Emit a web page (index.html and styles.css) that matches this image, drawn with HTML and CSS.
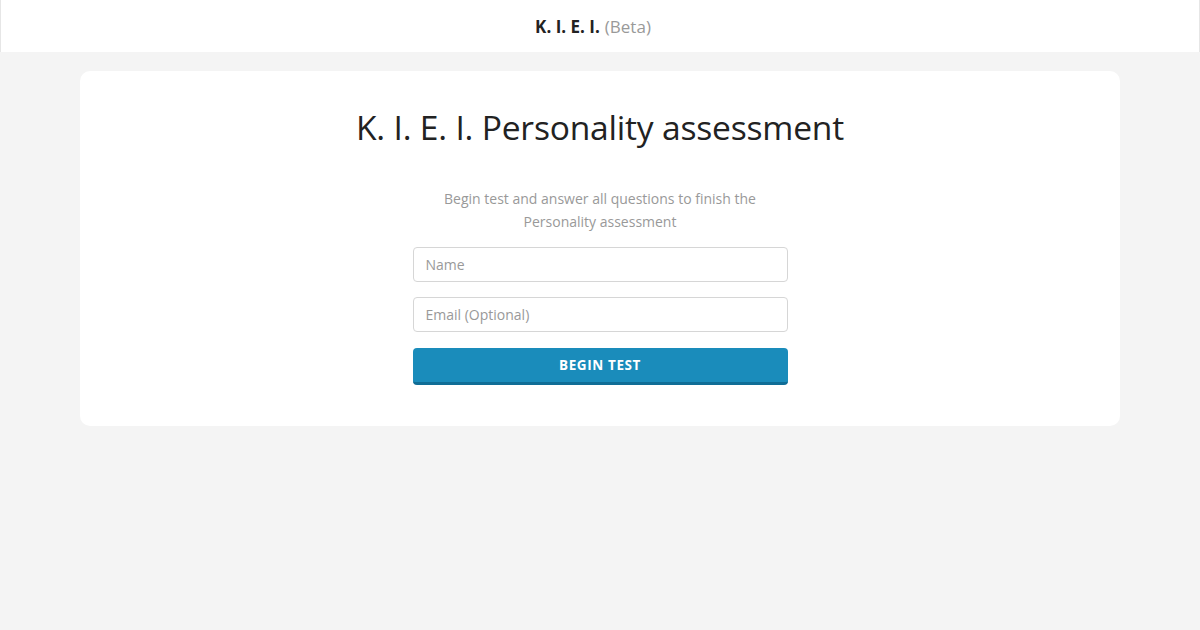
FILE: index.html
```html
<!DOCTYPE html>
<html lang="en">
<head>
<meta charset="utf-8">
<title>K. I. E. I. (Beta)</title>
<link rel="stylesheet" href="styles.css">
</head>
<body>
<header class="topbar">
  <span class="brand">K. I. E. I.</span> <span class="beta">(Beta)</span>
</header>
<main class="page">
  <section class="card">
    <h1 class="title">K. I. E. I. Personality assessment</h1>
    <p class="lead">Begin test and answer all questions to finish the Personality assessment</p>
    <form class="form">
      <input class="field" type="text" placeholder="Name">
      <input class="field" type="email" placeholder="Email (Optional)">
      <button class="btn" type="button">BEGIN TEST</button>
    </form>
  </section>
</main>
</body>
</html>
```
FILE: styles.css
```css
* { box-sizing: border-box; }
html, body { margin: 0; padding: 0; }
body {
  background: #f4f4f4;
  font-family: "Open Sans", "Noto Sans", sans-serif;
  color: #222;
  height: 630px;
}
.topbar {
  height: 52px;
  background: #fff;
  border-left: 1px solid #e6e6e6;
  border-right: 1px solid #e6e6e6;
  display: flex;
  align-items: center;
  justify-content: center;
  gap: 5px;
  padding-right: 14px;
  font-size: 17px;
}
.brand { font-weight: 700; color: #222; }
.beta { color: #999; }
.page {
  padding: 19px 80px 0;
}
.card {
  background: #fff;
  border-radius: 10px;
  height: 355px;
  display: flex;
  flex-direction: column;
  align-items: center;
  padding-top: 34px;
}
.title {
  margin: 0;
  font-weight: 400;
  font-size: 33.6px;
  line-height: 44px;
  color: #222;
  letter-spacing: -0.2px;
}
.lead {
  margin: 39px 0 0;
  width: 330px;
  text-align: center;
  font-size: 14px;
  line-height: 22.5px;
  color: #999;
}
.form {
  margin-top: 14px;
  width: 375px;
  display: flex;
  flex-direction: column;
}
.field {
  height: 35px;
  border: 1px solid #d6d6d6;
  border-radius: 4px;
  padding: 0 12px;
  font-family: inherit;
  font-size: 14px;
  color: #333;
  margin-bottom: 15px;
}
.field::placeholder { color: #999; }
.btn {
  height: 37px;
  border: 0;
  border-bottom: 3px solid #106d96;
  border-radius: 4px;
  background: #1a8cbb;
  color: #fff;
  font-family: inherit;
  font-weight: 700;
  font-size: 13.5px;
  letter-spacing: 0.6px;
  margin-top: 1px;
}
```
